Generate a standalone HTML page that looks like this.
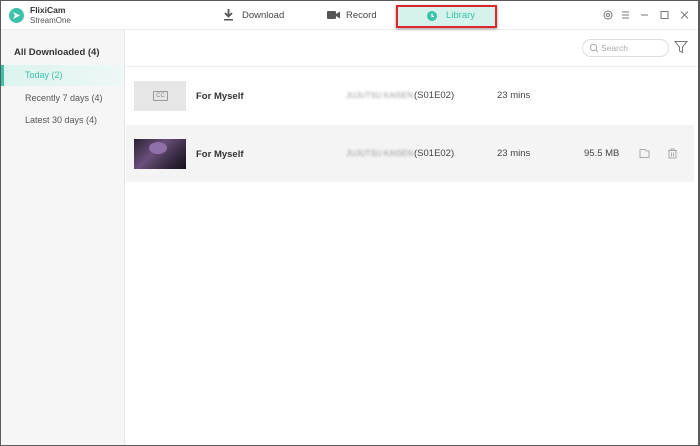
<!DOCTYPE html>
<html><head><style>
*{margin:0;padding:0;box-sizing:border-box}
body{width:700px;height:446px;overflow:hidden;background:#5a5a5a;font-family:"Liberation Sans",sans-serif;font-size:9px;color:#222}
.win{position:absolute;left:1px;top:1px;width:697px;height:444px;background:#fff;}
.top{position:absolute;left:0;top:0;width:697px;height:29px;background:#fff;border-bottom:1px solid #ececec}
.side{position:absolute;left:0;top:29px;width:124px;height:415px;background:#f6f6f6;border-right:1px solid #e6e6e6}
.t{position:absolute;white-space:nowrap}
.blur{filter:blur(1.3px);color:#999}
</style></head><body><div class="win">
<div class="top">
 <div style="position:absolute;left:8px;top:7px;width:15px;height:15px;border-radius:50%;background:#3cc2a8"></div>
 <svg style="position:absolute;left:11px;top:10px" width="9" height="9" viewBox="0 0 9 9"><path d="M1 1L8 4.5L1 8L3 4.5Z" fill="#fff"/></svg>
 <div class="t" style="left:29px;top:4px;font-size:8.5px;font-weight:bold;color:#333">FlixiCam</div>
 <div class="t" style="left:29px;top:15px;font-size:8px;color:#555">StreamOne</div>
 <svg style="position:absolute;left:222px;top:8px" width="11" height="12" viewBox="0 0 11 12"><path d="M5.5 0V7M2 4L5.5 7.5L9 4" stroke="#555" stroke-width="1.8" fill="none"/><rect x="1" y="10" width="9" height="1.5" fill="#555"/></svg>
 <div class="t" style="left:241px;top:9px;font-size:9.5px;color:#444">Download</div>
 <svg style="position:absolute;left:326px;top:9px" width="13" height="10" viewBox="0 0 13 10"><rect x="0" y="1" width="9" height="8" rx="1" fill="#555"/><path d="M9 4L13 1.5V8.5L9 6Z" fill="#555"/></svg>
 <div class="t" style="left:345px;top:9px;font-size:9.5px;color:#444">Record</div>
 <div style="position:absolute;left:395px;top:4px;width:101px;height:23px;background:#d5f3ec;border:2px solid #d9272a;box-shadow:0 1px 3px rgba(0,0,0,.4)"></div>
 <div style="position:absolute;left:426px;top:10px;width:10px;height:10px;border-radius:50%;background:#3cc2a8"></div>
 <svg style="position:absolute;left:426px;top:10px" width="10" height="10"><path d="M5 2.5V5.5H7" stroke="#fff" stroke-width="1.2" fill="none"/></svg>
 <div class="t" style="left:445px;top:9px;font-size:9.5px;color:#3cc2a8">Library</div>
 <svg style="position:absolute;left:602px;top:8px" width="90" height="12" viewBox="0 0 90 12"><circle cx="5" cy="6" r="4" stroke="#777" fill="none"/><circle cx="5" cy="6" r="1.5" stroke="#777" fill="none"/><path d="M19 3H26M19 6H26M19 9H26" stroke="#777"/><path d="M38 6H45" stroke="#777"/><rect x="58" y="2.5" width="7" height="7" stroke="#777" fill="none"/><path d="M78 2.5L85 9.5M85 2.5L78 9.5" stroke="#777"/></svg>
</div>
<div class="side">
 <div class="t" style="left:13px;top:17px;font-size:9.5px;font-weight:bold;color:#333">All Downloaded (4)</div>
 <div style="position:absolute;left:0;top:35px;width:123px;height:21px;background:linear-gradient(90deg,#dcf3ee,#eef8f6)"></div>
 <div style="position:absolute;left:0;top:35px;width:3px;height:21px;background:#3cc2a8"></div>
 <div class="t" style="left:24px;top:40px;font-size:9px;color:#3cc2a8">Today (2)</div>
 <div class="t" style="left:24px;top:63px;font-size:9px;color:#555">Recently 7 days (4)</div>
 <div class="t" style="left:24px;top:85px;font-size:9px;color:#555">Latest 30 days (4)</div>
</div>
<div style="position:absolute;left:125px;top:65px;width:572px;height:1px;background:#ececec"></div>
<div style="position:absolute;left:581px;top:38px;width:87px;height:18px;border:1px solid #ddd;border-radius:9px"></div>
<svg style="position:absolute;left:588px;top:42px" width="10" height="10"><circle cx="4.5" cy="4.5" r="3.2" stroke="#aaa" fill="none"/><path d="M7 7L9 9" stroke="#aaa"/></svg>
<div class="t" style="left:600px;top:42px;font-size:8.5px;color:#aaa">Search</div>
<svg style="position:absolute;left:673px;top:39px" width="14" height="14"><path d="M1 1.5H13L8.5 7V12.5L5.5 11V7Z" stroke="#777" fill="none"/></svg>
<div style="position:absolute;left:133px;top:80px;width:52px;height:30px;background:#e6e6e6"></div>
<div style="position:absolute;left:152px;top:90px;width:15px;height:10px;border:1px solid #999;border-radius:1px;font-size:6px;color:#888;text-align:center;line-height:8px">CC</div>
<div class="t" style="left:195px;top:90px;font-size:9.5px;font-weight:bold;color:#333">For Myself</div>
<div class="t blur" style="left:345px;top:90px;font-size:8px">JUJUTSU KAISEN</div>
<div class="t" style="left:413px;top:89px;font-size:9.5px;color:#444">(S01E02)</div>
<div class="t" style="left:496px;top:89px;font-size:9.5px;color:#444">23 mins</div>
<div style="position:absolute;left:125px;top:124px;width:568px;height:57px;background:#f4f4f4"></div>
<div style="position:absolute;left:133px;top:138px;width:52px;height:30px;background:linear-gradient(135deg,#2a2230,#6a4f7a 40%,#3a2c44 70%,#151018)"></div>
<div style="position:absolute;left:148px;top:141px;width:18px;height:12px;border-radius:50%;background:#9070a8"></div>
<div class="t" style="left:195px;top:148px;font-size:9.5px;font-weight:bold;color:#333">For Myself</div>
<div class="t blur" style="left:345px;top:148px;font-size:8px">JUJUTSU KAISEN</div>
<div class="t" style="left:413px;top:147px;font-size:9.5px;color:#444">(S01E02)</div>
<div class="t" style="left:496px;top:147px;font-size:9.5px;color:#444">23 mins</div>
<div class="t" style="left:583px;top:147px;font-size:9.5px;color:#444">95.5 MB</div>
<svg style="position:absolute;left:638px;top:147px" width="42" height="11"><path d="M1 1.5H6L7.5 3H10V9.5H1Z" stroke="#aaa" fill="none"/><path d="M29 2.5H38M32 2.5V1H35V2.5M30 3V10H37V3M32.5 4.5V8.5M34.5 4.5V8.5" stroke="#aaa" fill="none"/></svg>
</div></body></html>
